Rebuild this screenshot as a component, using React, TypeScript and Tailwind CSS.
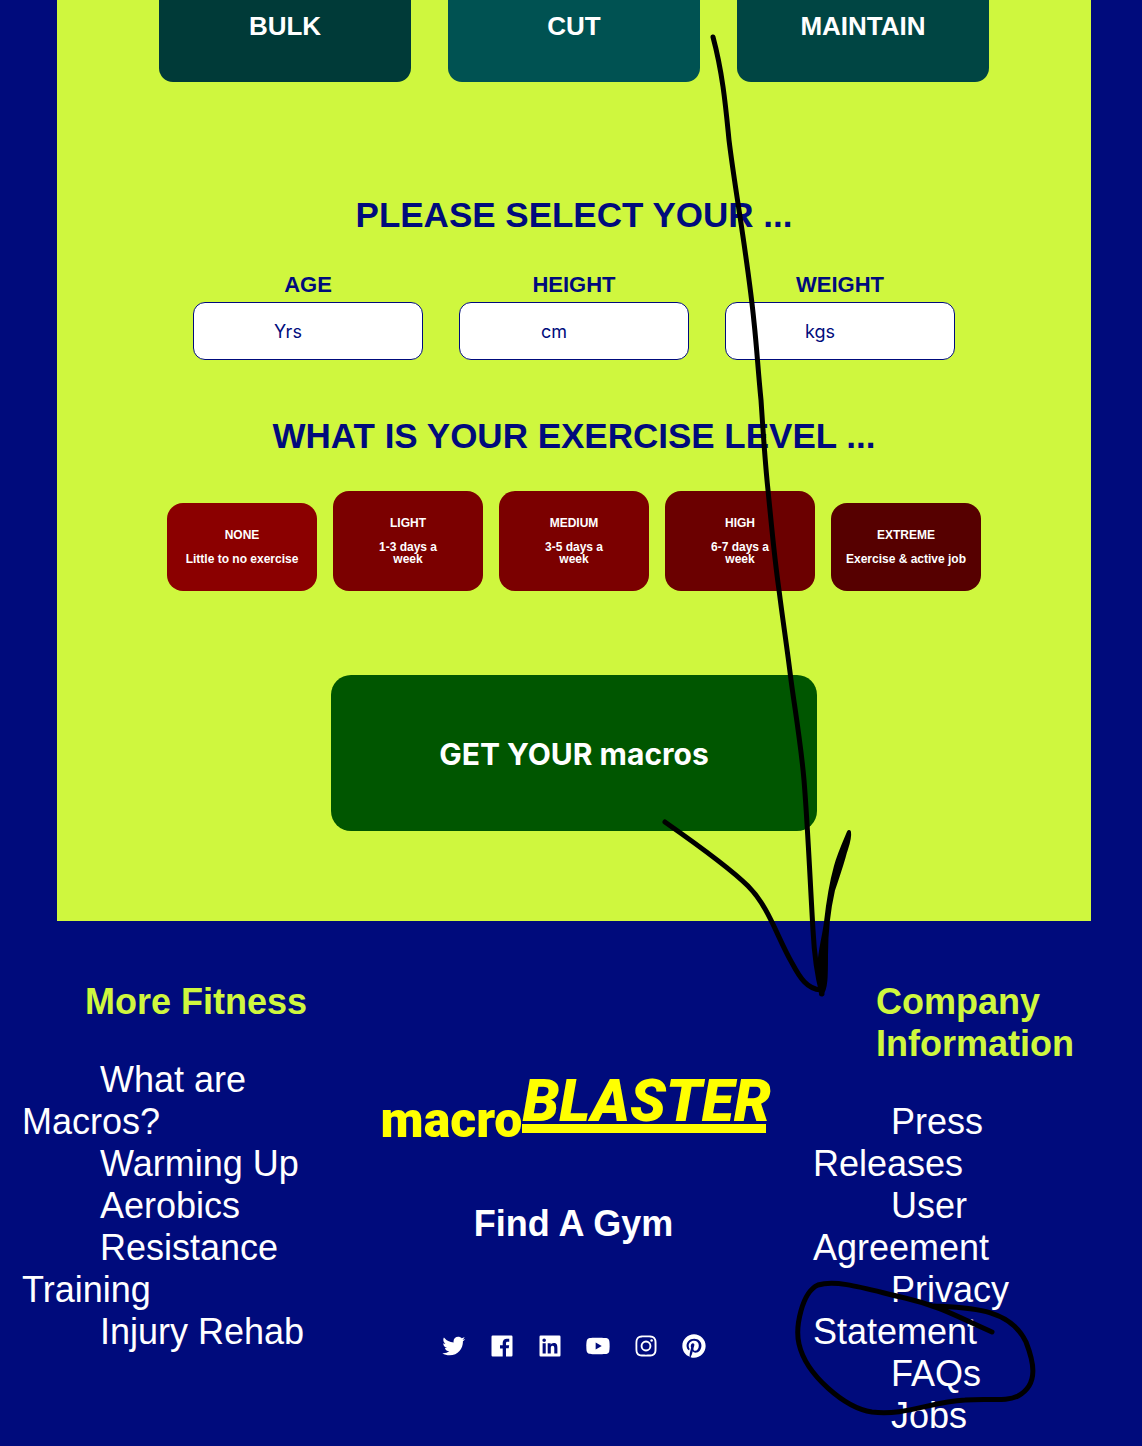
import {
  BiLogoTwitter,
  BiLogoFacebookSquare,
  BiLogoLinkedinSquare,
  BiLogoYoutube,
  BiLogoInstagram,
  BiLogoPinterest,
} from "react-icons/bi";

const goals = [
  { label: "BULK", color: "bg-[#003a38]" },
  { label: "CUT", color: "bg-[#005252]" },
  { label: "MAINTAIN", color: "bg-[#004543]" },
];

const measures = [
  { id: "age", label: "AGE", unit: "Yrs" },
  { id: "height", label: "HEIGHT", unit: "cm" },
  { id: "weight", label: "WEIGHT", unit: "kgs" },
];

const levels = [
  { name: "NONE", detail: "Little to no exercise", color: "bg-[#8b0000]", pad: "px-2" },
  { name: "LIGHT", detail: "1-3 days a week", color: "bg-[#7b0000]", pad: "px-10" },
  { name: "MEDIUM", detail: "3-5 days a week", color: "bg-[#7b0000]", pad: "px-10" },
  { name: "HIGH", detail: "6-7 days a week", color: "bg-[#6b0000]", pad: "px-10" },
  { name: "EXTREME", detail: "Exercise & active job", color: "bg-[#560000]", pad: "px-2" },
];

const socials = [
  { name: "Twitter", Icon: BiLogoTwitter },
  { name: "Facebook", Icon: BiLogoFacebookSquare },
  { name: "LinkedIn", Icon: BiLogoLinkedinSquare },
  { name: "YouTube", Icon: BiLogoYoutube },
  { name: "Instagram", Icon: BiLogoInstagram },
  { name: "Pinterest", Icon: BiLogoPinterest },
];

function LinkColumn({ title, links }: { title: string; links: string[] }) {
  return (
    <nav aria-label={title}>
      <h3 className="mb-9 pl-[63px] font-bold text-[#cff73e]">{title}</h3>
      <ul>
        {links.map((link) => (
          <li key={link} className="indent-[78px]">
            <a href="#">{link}</a>
          </li>
        ))}
      </ul>
    </nav>
  );
}

function Sketch() {
  return (
    <svg
      className="pointer-events-none absolute inset-x-0 top-0 w-full"
      viewBox="0 0 1142 1446"
      fill="none"
      stroke="#000"
      strokeWidth="5"
      strokeLinecap="round"
      strokeLinejoin="round"
      aria-hidden="true"
    >
      <path d="M713 37C723 74 726 110 729 140C735 190 748 260 754 322C757 350 758 370 761 400C763 430 765 462 768 490C772 530 774 555 779 590C783 622 787 647 791 680C795 710 801 745 804 780C808 830 810 880 813 930C814 950 817 975 822 994" />
      <path d="M665 822C685 836 728 866 748 886C769 907 777 937 792 963C800 978 807 989 821 990" />
      <path
        fill="#000"
        strokeWidth="4"
        d="M849 832C843 846 839 855 836 866C831 884 828 904 826 922C824 938 820 950 819 968L821 994C826 990 826 975 826 955C826 930 828 912 833 890C837 878 842 864 845 852C848 843 850 838 849 832Z"
      />
      <path d="M992 1332C960 1318 940 1306 905 1298C870 1290 838 1279 818 1285C802 1292 795 1327 799 1344C806 1375 845 1408 872 1412C905 1416 930 1402 965 1400C990 1398 1006 1402 1018 1396C1040 1384 1033 1360 1026 1342C1010 1308 970 1308 934 1306" />
    </svg>
  );
}

export default function App() {
  return (
    <div className="relative overflow-hidden bg-[#000b7c] font-['Liberation_Sans',Arial,sans-serif]">
      <main className="mr-[51px] ml-[57px] flex flex-col items-center bg-[#cff73e] pb-[90px] text-[#000b7c]">
        <div className="flex justify-center gap-[37px]">
          {goals.map((goal) => (
            <button
              key={goal.label}
              type="button"
              className={`h-[82px] w-[252px] rounded-b-[14px] pb-[30px] text-[26px] font-bold text-white ${goal.color}`}
            >
              {goal.label}
            </button>
          ))}
        </div>

        <h2 className="mt-[113px] text-[35px] leading-[40px] font-bold">PLEASE SELECT YOUR ...</h2>

        <div className="mt-9 flex justify-center gap-9">
          {measures.map((m) => (
            <div key={m.id} className="flex w-[230px] flex-col items-center">
              <label htmlFor={m.id} className="mb-[3px] text-[22px] leading-[28px] font-bold">
                {m.label}
              </label>
              <input
                id={m.id}
                placeholder={m.unit}
                className="h-[58px] w-full rounded-[12px] border border-[#000b7c] bg-white pr-10 text-center font-['Inter',sans-serif] text-[18px] placeholder:text-[#000b7c]"
              />
            </div>
          ))}
        </div>

        <h2 className="mt-14 text-[35px] leading-[40px] font-bold">WHAT IS YOUR EXERCISE LEVEL ...</h2>

        <div className="mt-[35px] flex items-end justify-center gap-4">
          {levels.map((level) => (
            <button
              key={level.name}
              type="button"
              className={`w-[150px] rounded-[16px] py-[26px] text-[12px] leading-[12px] font-bold text-white ${level.color} ${level.pad}`}
            >
              <span className="mb-3 block">{level.name}</span>
              <span className="block">{level.detail}</span>
            </button>
          ))}
        </div>

        <button
          type="button"
          className="mt-[84px] h-[156px] w-[486px] rounded-[20px] bg-[#005600] pt-[2px] font-['Inter',sans-serif] text-[30px] font-bold text-white"
        >
          GET YOUR macros
        </button>
      </main>

      <footer className="grid grid-cols-[312px_1fr_304px] pt-[60px] pr-[25px] pb-[9px] pl-[22px] text-[36px] leading-[42px] text-white">
        <LinkColumn
          title="More Fitness"
          links={["What are Macros?", "Warming Up", "Aerobics", "Resistance Training", "Injury Rehab"]}
        />

        <div className="flex flex-col items-center">
          <a
            href="#"
            aria-label="macroBLASTER"
            className="mt-[94px] flex items-start font-['Roboto',sans-serif] font-black text-[#ffff00]"
          >
            <span className="mt-[20px] text-[50px] leading-[50px]">macro</span>
            <span className="mt-[3px] w-[244px] border-b-[9px] border-[#ffff00] text-[59px] leading-[46px] italic">
              BLASTER
            </span>
          </a>
          <a href="#" className="mt-[58px] font-bold">
            Find A Gym
          </a>
          <div className="mt-[87px] flex gap-5">
            {socials.map(({ name, Icon }) => (
              <a key={name} href="#" aria-label={name}>
                <Icon size={28} />
              </a>
            ))}
          </div>
        </div>

        <LinkColumn
          title="Company Information"
          links={["Press Releases", "User Agreement", "Privacy Statement", "FAQs", "Jobs"]}
        />
      </footer>

      <Sketch />
    </div>
  );
}
